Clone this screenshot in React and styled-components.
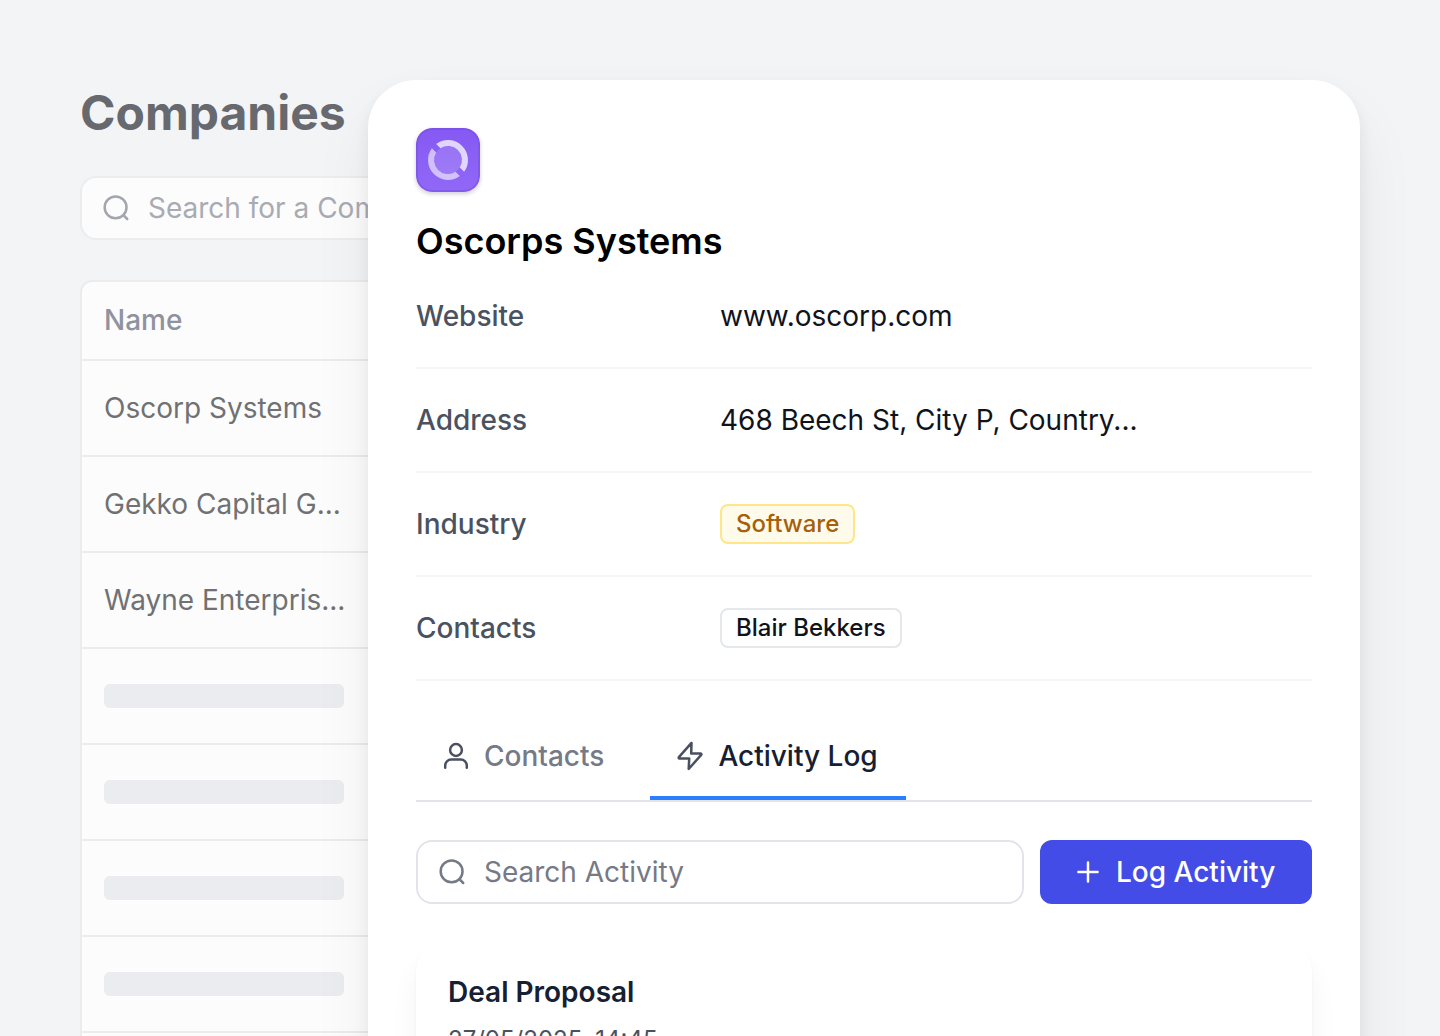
import React, { useState } from 'react';
import styled, { createGlobalStyle } from 'styled-components';

const GlobalStyle = createGlobalStyle`
  * {
    box-sizing: border-box;
  }

  body {
    margin: 0;
    background: #f3f4f6;
    font-family: Inter, 'Liberation Sans', sans-serif;
    font-size: 28px;
    line-height: 40px;
    color: #10131c;
  }

  button,
  input {
    font: inherit;
  }
`;

const Page = styled.div`
  display: grid;
  grid-template-columns: 288px minmax(0, 1fr);
  height: 100vh;
  padding: 80px 80px 0;
  overflow: hidden;
`;

/* Both panels share the grid row, the details panel covers the list. */
const CompaniesPanel = styled.section`
  grid-column: 1 / -1;
  grid-row: 1;
  display: flex;
  flex-direction: column;
`;

const DetailsPanel = styled.main`
  grid-column: 2;
  grid-row: 1;
  z-index: 1;
  min-height: calc(100vh - 80px);
  padding: 48px 48px 0;
  border-radius: 48px 48px 0 0;
  background: #fff;
  box-shadow: 0 8px 16px rgba(0, 0, 0, 0.07), 0 32px 64px rgba(0, 0, 0, 0.06);
`;

const PageTitle = styled.h1`
  margin: 0 0 30px;
  font-size: 48px;
  line-height: 66px;
  font-weight: 700;
  color: #67696f;
`;

const SearchField = styled.label`
  display: flex;
  flex: 1 0 auto;
  align-items: center;
  gap: 16px;
  height: 64px;
  padding: 0 18px;
  border: 2px solid ${(props) => (props.$muted ? '#ebecee' : '#e2e4e9')};
  border-radius: 16px;
  background: ${(props) => (props.$muted ? '#fcfcfd' : '#fff')};
  color: ${(props) => (props.$muted ? '#a4a6ae' : '#757a86')};
`;

const SearchInput = styled.input`
  flex: 1;
  min-width: 0;
  padding: 0;
  border: 0;
  outline: 0;
  background: transparent;
  color: #10131c;

  &::placeholder {
    color: ${(props) => (props.$muted ? '#a9abb2' : '#757a86')};
    opacity: 1;
  }
`;

const Toolbar = styled.div`
  display: flex;
  gap: 16px;
  margin-bottom: ${(props) => props.$space}px;
`;

const Table = styled.table`
  width: 100%;
  border: 2px solid #ebecee;
  border-radius: 12px;
  border-spacing: 0;
  background: #fcfcfd;
`;

const HeadCell = styled.th`
  height: 79px;
  padding: 0 22px 2px;
  border-bottom: 2px solid #ebecee;
  font-weight: 500;
  text-align: left;
  color: #8f929f;
`;

const Cell = styled.td`
  height: 96px;
  padding: 0 22px;
  border-bottom: 2px solid #ebecee;
  color: #707172;
`;

const Skeleton = styled.div`
  width: 240px;
  height: 24px;
  border-radius: 6px;
  background: #ebecef;
`;

const CompanyName = styled.h2`
  margin: 25px 0 0;
  font-size: 36px;
  line-height: 48px;
  font-weight: 600;
  color: #000;
`;

const Logo = styled.svg`
  display: block;
  border-radius: 16px;
  box-shadow: 0 2px 4px rgba(20, 10, 60, 0.2);
`;

const Details = styled.dl`
  margin: 0 0 31px;
`;

const DetailRow = styled.div`
  display: flex;
  align-items: center;
  height: 104px;
  border-bottom: 2px solid #f5f6f7;
`;

const DetailLabel = styled.dt`
  flex: 0 0 304px;
  font-weight: 500;
  color: #4a5261;
`;

const DetailValue = styled.dd`
  margin: 0;
`;

const Tag = styled.span`
  display: block;
  padding: 0 14px;
  border: 2px solid ${(props) => (props.$warm ? '#ffe58a' : '#e4e8eb')};
  border-radius: 8px;
  background: ${(props) => (props.$warm ? '#fffbeb' : '#fff')};
  color: ${(props) => (props.$warm ? '#a65f0a' : '#10131c')};
  font-size: 24px;
  line-height: 36px;
  font-weight: 500;
`;

const Tabs = styled.div`
  display: flex;
  gap: 18px;
  margin-bottom: 38px;
  border-bottom: 2px solid #e2e4e9;
`;

const Tab = styled.button`
  display: flex;
  align-items: center;
  gap: 12px;
  height: 88px;
  padding: 4px 28px 0 24px;
  border: 0;
  border-bottom: 4px solid ${(props) => (props.$active ? '#2b7fff' : 'transparent')};
  background: none;
  color: ${(props) => (props.$active ? '#162032' : '#757a86')};
  font-weight: 500;
  cursor: pointer;

  svg {
    color: #4a5060;
  }
`;

const PrimaryButton = styled.button`
  display: flex;
  flex: none;
  align-items: center;
  gap: 12px;
  min-width: 272px;
  height: 64px;
  padding: 0 32px;
  border: 0;
  border-radius: 12px;
  background: #444ce7;
  color: #fff;
  font-weight: 500;
  cursor: pointer;
`;

const ActivityCard = styled.article`
  padding: 32px;
  border-radius: 32px;
  background: #fff;
  box-shadow: 0 1px 3px rgba(0, 0, 0, 0.04), 0 20px 28px rgba(0, 0, 0, 0.05);
`;

const ActivityTitle = styled.h3`
  margin: 0 0 8px;
  font-size: 28px;
  line-height: 40px;
  font-weight: 600;
  color: #162032;
`;

const ActivityDate = styled.time`
  display: block;
  font-size: 24px;
  color: #4a5261;
`;

const Icon = ({ children }) => (
  <svg
    width="32"
    height="32"
    viewBox="0 0 32 32"
    fill="none"
    stroke="currentColor"
    strokeWidth="2.5"
    strokeLinecap="round"
    strokeLinejoin="round"
    aria-hidden="true"
  >
    {children}
  </svg>
);

const SearchIcon = () => (
  <Icon>
    <circle cx="15.6" cy="15.4" r="10.9" />
    <path d="M23.4 23.2 27.2 27" />
  </Icon>
);

const UserIcon = () => (
  <Icon>
    <circle cx="16" cy="10" r="5.9" />
    <path d="M5.2 27.8v-2.2a6 6 0 0 1 6-6h9.6a6 6 0 0 1 6 6v2.2" />
  </Icon>
);

const ZapIcon = () => (
  <Icon>
    <path d="M17.5 2.9 4.9 17.1a.9.9 0 0 0 .6 1.5H15.2L14.7 29 27.2 14.9a.9.9 0 0 0-.6-1.5H17.2Z" />
  </Icon>
);

const PlusIcon = () => (
  <Icon>
    <path d="M16 6.4V25.6M6.4 16H25.6" />
  </Icon>
);

const CompanyLogo = () => (
  <Logo width="64" height="64" viewBox="0 0 64 64" aria-hidden="true">
    <defs>
      <linearGradient id="logoFill" x1="0" y1="0" x2="0" y2="1">
        <stop offset="0" stopColor="#8559f3" />
        <stop offset="1" stopColor="#9168f7" />
      </linearGradient>
    </defs>
    <rect width="64" height="64" rx="16" fill="url(#logoFill)" />
    <rect x="1" y="1" width="62" height="62" rx="15" fill="none" stroke="#6f4ad6" strokeOpacity="0.4" strokeWidth="2" />
    <g transform="translate(32 32) rotate(45)">
      <circle r="14" fill="#fff" fillOpacity="0.14" />
      <path d="M-19.77-3A20 20 0 0 1 19.77-3H13.67A14 14 0 0 0-13.67-3Z" fill="#fff" fillOpacity="0.74" />
      <path d="M-19.77 3A20 20 0 0 0 19.77 3H13.67A14 14 0 0 1-13.67 3Z" fill="#fff" fillOpacity="0.6" />
    </g>
  </Logo>
);

const companies = ['Oscorp Systems', 'Gekko Capital G...', 'Wayne Enterpris...'];
const placeholderRows = [1, 2, 3, 4, 5];

const tabs = [
  { id: 'contacts', label: 'Contacts', icon: <UserIcon /> },
  { id: 'activity', label: 'Activity Log', icon: <ZapIcon /> },
];

const CompanyPage = () => {
  const [activeTab, setActiveTab] = useState('activity');

  return (
    <>
      <GlobalStyle />
      <Page>
        <CompaniesPanel>
          <PageTitle>Companies</PageTitle>
          <Toolbar $space={40}>
            <SearchField $muted>
              <SearchIcon />
              <SearchInput
                $muted
                type="text"
                placeholder="Search for a Company"
                aria-label="Search for a Company"
              />
            </SearchField>
          </Toolbar>
          <Table>
            <thead>
              <tr>
                <HeadCell scope="col">Name</HeadCell>
              </tr>
            </thead>
            <tbody>
              {companies.map((company) => (
                <tr key={company}>
                  <Cell>{company}</Cell>
                </tr>
              ))}
              {placeholderRows.map((row) => (
                <tr key={row}>
                  <Cell>
                    <Skeleton />
                  </Cell>
                </tr>
              ))}
            </tbody>
          </Table>
        </CompaniesPanel>

        <DetailsPanel>
          <CompanyLogo />
          <CompanyName>Oscorps Systems</CompanyName>
          <Details>
            <DetailRow>
              <DetailLabel>Website</DetailLabel>
              <DetailValue>www.oscorp.com</DetailValue>
            </DetailRow>
            <DetailRow>
              <DetailLabel>Address</DetailLabel>
              <DetailValue>468 Beech St, City P, Country...</DetailValue>
            </DetailRow>
            <DetailRow>
              <DetailLabel>Industry</DetailLabel>
              <DetailValue>
                <Tag $warm>Software</Tag>
              </DetailValue>
            </DetailRow>
            <DetailRow>
              <DetailLabel>Contacts</DetailLabel>
              <DetailValue>
                <Tag>Blair Bekkers</Tag>
              </DetailValue>
            </DetailRow>
          </Details>

          <Tabs role="tablist">
            {tabs.map((tab) => (
              <Tab
                key={tab.id}
                type="button"
                role="tab"
                aria-selected={activeTab === tab.id}
                $active={activeTab === tab.id}
                onClick={() => setActiveTab(tab.id)}
              >
                {tab.icon}
                {tab.label}
              </Tab>
            ))}
          </Tabs>

          <Toolbar $space={36}>
            <SearchField>
              <SearchIcon />
              <SearchInput type="text" placeholder="Search Activity" aria-label="Search Activity" />
            </SearchField>
            <PrimaryButton type="button">
              <PlusIcon />
              Log Activity
            </PrimaryButton>
          </Toolbar>

          <ActivityCard>
            <ActivityTitle>Deal Proposal</ActivityTitle>
            <ActivityDate dateTime="2025-05-27T14:45">27/05/2025, 14:45</ActivityDate>
          </ActivityCard>
        </DetailsPanel>
      </Page>
    </>
  );
};

export default CompanyPage;
